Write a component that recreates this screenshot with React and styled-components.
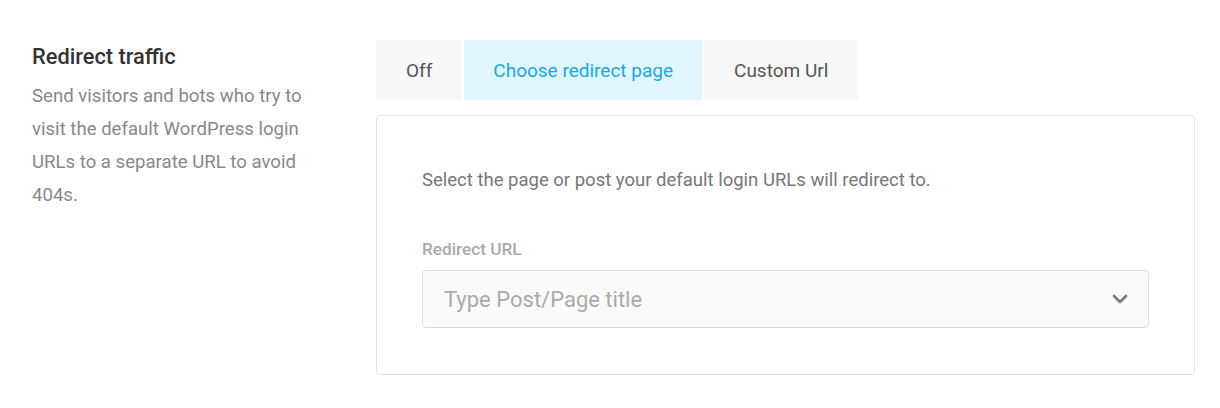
import React, { useState } from 'react';
import styled, { createGlobalStyle } from 'styled-components';

const GlobalStyle = createGlobalStyle`
    body {
        margin: 0;
        background: #fff;
        font-family: Roboto, 'Liberation Sans', sans-serif;
    }
`

const Row = styled.div`
    display: flex;
    padding: 40px 25px 0 32px;
`
const Info = styled.div`
    width: 344px;
    flex-shrink: 0;
`
const Title = styled.h3`
    margin: 2px 0 0 0;
    font-size: 21.8px;
    font-weight: 500;
    color: #333;
    line-height: 30px;
`
const Desc = styled.p`
    margin: 8px 0 0 0;
    width: 285px;
    font-size: 18.6px;
    line-height: 33px;
    color: #888;
`
const Main = styled.div`
    flex: 1;
`
const Tabs = styled.div`
    display: flex;
    gap: 2px;
`
const Tab = styled.button`
    height: 60px;
    padding: 0 ${({pad}) => pad}px;
    border: none;
    font-family: inherit;
    font-size: 19px;
    cursor: pointer;
    color: ${({active}) => active ? '#17a8e3' : '#555'};
    background: ${({active}) => active ? '#e1f5fe' : '#f8f8f8'};
    &:first-child {
        border-radius: 4px 0 0 4px;
    }
`
const Card = styled.div`
    margin-top: 15px;
    border: 1px solid #e5e5e5;
    border-radius: 4px;
    padding: 50px 45px 46px 45px;
`
const Hint = styled.p`
    margin: 0;
    font-size: 18.5px;
    color: #777;
    line-height: 28px;
`
const Label = styled.label`
    display: block;
    margin-top: 44px;
    font-size: 17.2px;
    font-weight: 500;
    color: #aaa;
    line-height: 22px;
`
const Select = styled.div`
    margin-top: 10px;
    height: 56px;
    border: 1px solid #ddd;
    border-radius: 4px;
    background: #fafafa;
    display: flex;
    align-items: center;
    justify-content: space-between;
    padding: 0 20px 0 21px;
`
const Placeholder = styled.span`
    font-size: 22px;
    color: #aaa;
`

const Chevron = () => (
    <svg width="16" height="10" viewBox="0 0 16 10">
        <path d="M2 2 L8 8 L14 2" fill="none" stroke="#777" strokeWidth="2.6" strokeLinecap="round" strokeLinejoin="round" />
    </svg>
)

const tabs = [
    {label: 'Off', pad: 30},
    {label: 'Choose redirect page', pad: 29},
    {label: 'Custom Url', pad: 30},
]

const App = () => {
    const [current, setCurrent] = useState(1)
    return (
        <>
            <GlobalStyle />
            <Row>
                <Info>
                    <Title>Redirect traffic</Title>
                    <Desc>Send visitors and bots who try to visit the default WordPress login URLs to a separate URL to avoid 404s.</Desc>
                </Info>
                <Main>
                    <Tabs>
                        {tabs.map((t, i) => (
                            <Tab key={t.label} pad={t.pad} active={i === current} onClick={() => setCurrent(i)}>{t.label}</Tab>
                        ))}
                    </Tabs>
                    <Card>
                        <Hint>Select the page or post your default login URLs will redirect to.</Hint>
                        <Label>Redirect URL</Label>
                        <Select>
                            <Placeholder>Type Post/Page title</Placeholder>
                            <Chevron />
                        </Select>
                    </Card>
                </Main>
            </Row>
        </>
    )
}

export default App;
